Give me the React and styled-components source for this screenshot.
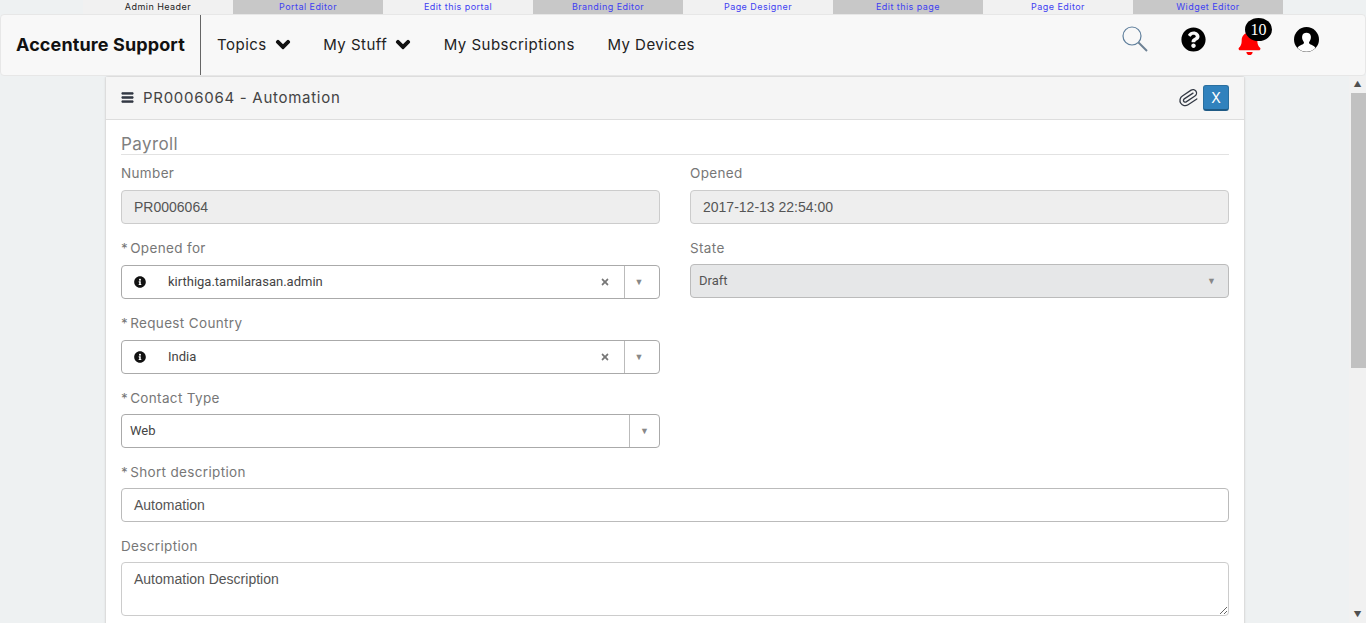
import React from "react";
import styled, { createGlobalStyle } from "styled-components";
import { FaBars, FaChevronDown, FaQuestionCircle, FaBell, FaInfoCircle, FaTimes } from "react-icons/fa";
import { Paperclip } from "lucide-react";

const Global = createGlobalStyle`
  html, body { margin: 0; height: 100%; overflow: hidden; }
  body { background: #eef1f2; font-family: Inter, "Liberation Sans", sans-serif; }
  * { box-sizing: border-box; }
`;

const tabs = [
  { name: "Admin Header", dark: true },
  { name: "Portal Editor", shaded: true },
  { name: "Edit this portal" },
  { name: "Branding Editor", shaded: true },
  { name: "Page Designer" },
  { name: "Edit this page", shaded: true },
  { name: "Page Editor" },
  { name: "Widget Editor", shaded: true },
];

const SearchIcon = () => (
  <SearchSvg width="26" height="26" viewBox="0 0 26 26" fill="none">
    <circle cx="10" cy="10" r="9" stroke="#5f7f9c" strokeWidth="1.2" />
    <path d="M16.5 16.5 L25 25" stroke="#6d8194" strokeWidth="2" />
  </SearchSvg>
);

const UserIcon = () => (
  <svg width="25" height="25" viewBox="0 0 25 25">
    <circle cx="12.5" cy="12.5" r="12.5" fill="#000" />
    <path d="M3.5 21c1.5-3 5-3 6.2-4.6.5-.8.2-1.500-.5-2.500-1-1.500-1.300-3.400-1-5 .4-2 2.200-3.200 4.300-3.200s3.900 1.200 4.300 3.200c.3 1.600 0 3.500-1 5-.7 1-1 1.700-.5 2.500C16.500 18 20 18 21.500 21c-2.300 2.400-5.500 3.800-9 3.800s-6.700-1.400-9-3.800z" fill="#fff" />
  </svg>
);

const App = () => (
  <>
    <Global />
    <TabStrip>
      {tabs.map((t) => (
        <Tab key={t.name} $shaded={t.shaded} $dark={t.dark}>
          {t.name}
        </Tab>
      ))}
    </TabStrip>
    <Nav>
      <Brand>Accenture Support</Brand>
      <NavList>
        <NavItem>
          Topics <Caret />
        </NavItem>
        <NavItem>
          My Stuff <Caret />
        </NavItem>
        <NavItem>My Subscriptions</NavItem>
        <NavItem>My Devices</NavItem>
      </NavList>
      <NavIcons>
        <SearchIcon />
        <FaQuestionCircle size={25} color="#000" />
        <BellWrap>
          <Bell size={25} color="#ff0000" />
          <Badge>10</Badge>
        </BellWrap>
        <UserIcon />
      </NavIcons>
    </Nav>
    <Body>
      <Main>
        <Panel>
          <PanelHeading>
            <MenuIcon size={13} color="#343a45" />
            <PanelTitle>PR0006064 - Automation</PanelTitle>
            <PanelActions>
              <Clip size={21} color="#343a45" strokeWidth={1.5} />
              <CloseButton>X</CloseButton>
            </PanelActions>
          </PanelHeading>
          <PanelBody>
            <Section>Payroll</Section>
            <Row>
              <Field $bottom={14}>
                <Label>Number</Label>
                <Input $readonly>PR0006064</Input>
              </Field>
              <Field>
                <Label>Opened</Label>
                <Input $readonly>2017-12-13 22:54:00</Input>
              </Field>
            </Row>
            <Row>
              <Field $bottom={14}>
                <Label><Star>*</Star>Opened for</Label>
                <Lookup>
                  <InfoSlot><FaInfoCircle size={12} color="#111" /></InfoSlot>
                  <LookupValue>kirthiga.tamilarasan.admin</LookupValue>
                  <ClearSlot><FaTimes size={10} color="#777" /></ClearSlot>
                  <Arrow>▼</Arrow>
                </Lookup>
              </Field>
              <Field>
                <Label>State</Label>
                <DisabledSelect>
                  Draft
                  <DisabledArrow>▼</DisabledArrow>
                </DisabledSelect>
              </Field>
            </Row>
            <Row>
              <Field $bottom={14}>
                <Label><Star>*</Star>Request Country</Label>
                <Lookup>
                  <InfoSlot><FaInfoCircle size={12} color="#111" /></InfoSlot>
                  <LookupValue>India</LookupValue>
                  <ClearSlot><FaTimes size={10} color="#777" /></ClearSlot>
                  <Arrow>▼</Arrow>
                </Lookup>
              </Field>
              <Field />
            </Row>
            <Row>
              <Field $bottom={14}>
                <Label $tight><Star>*</Star>Contact Type</Label>
                <Lookup>
                  <PlainValue>Web</PlainValue>
                  <Arrow $narrow>▼</Arrow>
                </Lookup>
              </Field>
              <Field />
            </Row>
            <Field $bottom={14}>
              <Label $tight><Star>*</Star>Short description</Label>
              <Input>Automation</Input>
            </Field>
            <Field>
              <Label $tight>Description</Label>
              <TextArea readOnly defaultValue="Automation Description" />
            </Field>
          </PanelBody>
        </Panel>
      </Main>
      <Scrollbar>
        <ScrollArrow>▲</ScrollArrow>
        <Thumb />
        <Spacer />
        <ScrollArrow>▼</ScrollArrow>
      </Scrollbar>
    </Body>
  </>
);

export default App;

const TabStrip = styled.div`
  display: flex;
  height: 14px;
  padding-left: 83px;
`;
const Tab = styled.div`
  width: 150px;
  height: 14px;
  text-align: center;
  font-size: 9px;
  line-height: 14px;
  letter-spacing: 0.45px;
  background: ${(p) => (p.$shaded ? "#c8c8c8" : "#f1f1f1")};
  color: ${(p) => (p.$dark ? "#222" : "#3f3ff2")};
`;
const Nav = styled.div`
  display: flex;
  height: 62px;
  background: #f8f8f8;
  border: 1px solid #e7e7e7;
  border-radius: 4px;
`;
const Brand = styled.div`
  width: 200px;
  padding: 20px 0 0 15px;
  font-size: 18px;
  font-weight: 700;
  line-height: 20px;
  letter-spacing: 0.12px;
  color: #111;
  border-right: 1px solid #666;
  white-space: nowrap;
`;
const NavList = styled.div`
  display: flex;
  padding: 19px 0 0 16px;
`;
const NavItem = styled.div`
  display: flex;
  gap: 8px;
  align-items: center;
  height: 20px;
  margin-right: 32.5px;
  font-size: 15px;
  letter-spacing: 0.48px;
  color: #222;
  white-space: nowrap;
`;
const Caret = styled(FaChevronDown)`
  width: 16px;
  height: 15px;
  color: #111;
  stroke: #111;
  stroke-width: 50px;
`;
const NavIcons = styled.div`
  display: flex;
  align-items: flex-start;
  gap: 33px;
  margin-left: auto;
  padding: 12px 46px 0 0;
`;
const SearchSvg = styled.svg`
  margin-top: -1px;
`;
const BellWrap = styled.div`
  position: relative;
  width: 22px;
  height: 25px;
  padding-top: 3px;
`;
const Bell = styled(FaBell)`
  display: block;
  margin-left: -2px;
`;
const Badge = styled.span`
  position: absolute;
  top: -9px;
  left: 6px;
  width: 27px;
  height: 23px;
  border-radius: 50%;
  background: #000;
  color: #fff;
  font-family: "Liberation Serif", serif;
  font-size: 16px;
  line-height: 23px;
  text-align: center;
`;
const Body = styled.div`
  display: flex;
  height: 547px;
`;
const Main = styled.div`
  flex: 1;
  padding-left: 105px;
  overflow: hidden;
`;
const Panel = styled.div`
  width: 1140px;
  background: #fff;
  border: 1px solid #ddd;
  border-bottom: 0;
  border-radius: 4px 4px 0 0;
  box-shadow: 0 0 2px rgba(0, 0, 0, 0.1);
`;
const PanelHeading = styled.div`
  display: flex;
  align-items: center;
  height: 43px;
  padding: 0 15px 1px;
  background: #f5f5f5;
  border-bottom: 1px solid #ddd;
`;
const MenuIcon = styled(FaBars)`
  stroke: #343a45;
  stroke-width: 25px;
`;
const PanelTitle = styled.div`
  margin-left: 9px;
  font-size: 15px;
  letter-spacing: 0.72px;
  color: #444;
`;
const PanelActions = styled.div`
  display: flex;
  align-items: center;
  gap: 4px;
  margin-left: auto;
`;
const Clip = styled(Paperclip)`
  transform: rotate(12deg);
`;
const CloseButton = styled.div`
  width: 26px;
  height: 26px;
  background: #3182bd;
  border: 1px solid #2a6f9f;
  border-bottom: 2px solid #1f5a85;
  border-radius: 3px;
  color: #fff;
  font-size: 14px;
  line-height: 24px;
  text-align: center;
`;
const PanelBody = styled.div`
  padding: 13px 15px 15px;
`;
const Section = styled.div`
  height: 22px;
  margin-bottom: 8px;
  font-size: 17px;
  line-height: 22px;
  letter-spacing: 0.4px;
  color: #808080;
  border-bottom: 1px solid #e2e2e2;
`;
const Row = styled.div`
  display: grid;
  grid-template-columns: 539px 539px;
  gap: 30px;
`;
const Field = styled.div`
  margin-bottom: ${(p) => p.$bottom || 0}px;
`;
const Label = styled.div`
  height: ${(p) => (p.$tight ? "26px" : "27px")};
  font-size: 13.5px;
  line-height: 20px;
  letter-spacing: 0.35px;
  color: #777;
`;
const Star = styled.span`
  margin-right: 2px;
  color: #777;
`;
const Input = styled.div`
  height: 34px;
  padding: 0 12px;
  border: 1px solid ${(p) => (p.$readonly ? "#ccc" : "#bbb")};
  border-radius: 4px;
  background: ${(p) => (p.$readonly ? "#eee" : "#fff")};
  font-family: "Liberation Sans", sans-serif;
  font-size: 14px;
  line-height: 32px;
  color: #555;
`;
const Lookup = styled.div`
  display: flex;
  align-items: center;
  height: 34px;
  border: 1px solid #aaa;
  border-radius: 4px;
  background: #fff;
  font-family: Roboto, "Liberation Sans", sans-serif;
  font-size: 13px;
  color: #444;
`;
const InfoSlot = styled.div`
  display: flex;
  width: 46px;
  padding-left: 12px;
`;
const LookupValue = styled.div`
  flex: 1;
  margin-top: -2px;
`;
const PlainValue = styled.div`
  flex: 1;
  margin-top: -2px;
  padding-left: 8px;
`;
const ClearSlot = styled.div`
  display: flex;
  width: 24px;
`;
const Arrow = styled.div`
  width: ${(p) => (p.$narrow ? "30px" : "35px")};
  height: 32px;
  padding-right: ${(p) => (p.$narrow ? "0" : "6px")};
  border-left: 1px solid #bbb;
  font-size: 9px;
  line-height: 32px;
  text-align: center;
  color: #888;
`;
const DisabledSelect = styled.div`
  display: flex;
  justify-content: space-between;
  height: 34px;
  margin-top: -1px;
  padding: 0 12px 0 8px;
  border: 1px solid #bbb;
  border-radius: 4px;
  background: #e6e7e8;
  font-family: Roboto, "Liberation Sans", sans-serif;
  font-size: 13px;
  line-height: 32px;
  color: #555;
`;
const DisabledArrow = styled.span`
  font-size: 9px;
  color: #888;
`;
const TextArea = styled.textarea`
  display: block;
  width: 100%;
  height: 54px;
  padding: 8px 12px;
  border: 1px solid #ccc;
  border-radius: 4px;
  font-family: "Liberation Sans", sans-serif;
  font-size: 14px;
  color: #555;
  resize: vertical;
  outline: none;
`;
const Scrollbar = styled.div`
  display: flex;
  flex-direction: column;
  align-items: center;
  width: 17px;
  background: #f1f1f1;
`;
const ScrollArrow = styled.div`
  height: 17px;
  font-size: 8px;
  line-height: 17px;
  color: #505050;
`;
const Thumb = styled.div`
  align-self: flex-end;
  width: 15px;
  height: 275px;
  background: #c1c1c1;
`;
const Spacer = styled.div`
  flex: 1;
`;
